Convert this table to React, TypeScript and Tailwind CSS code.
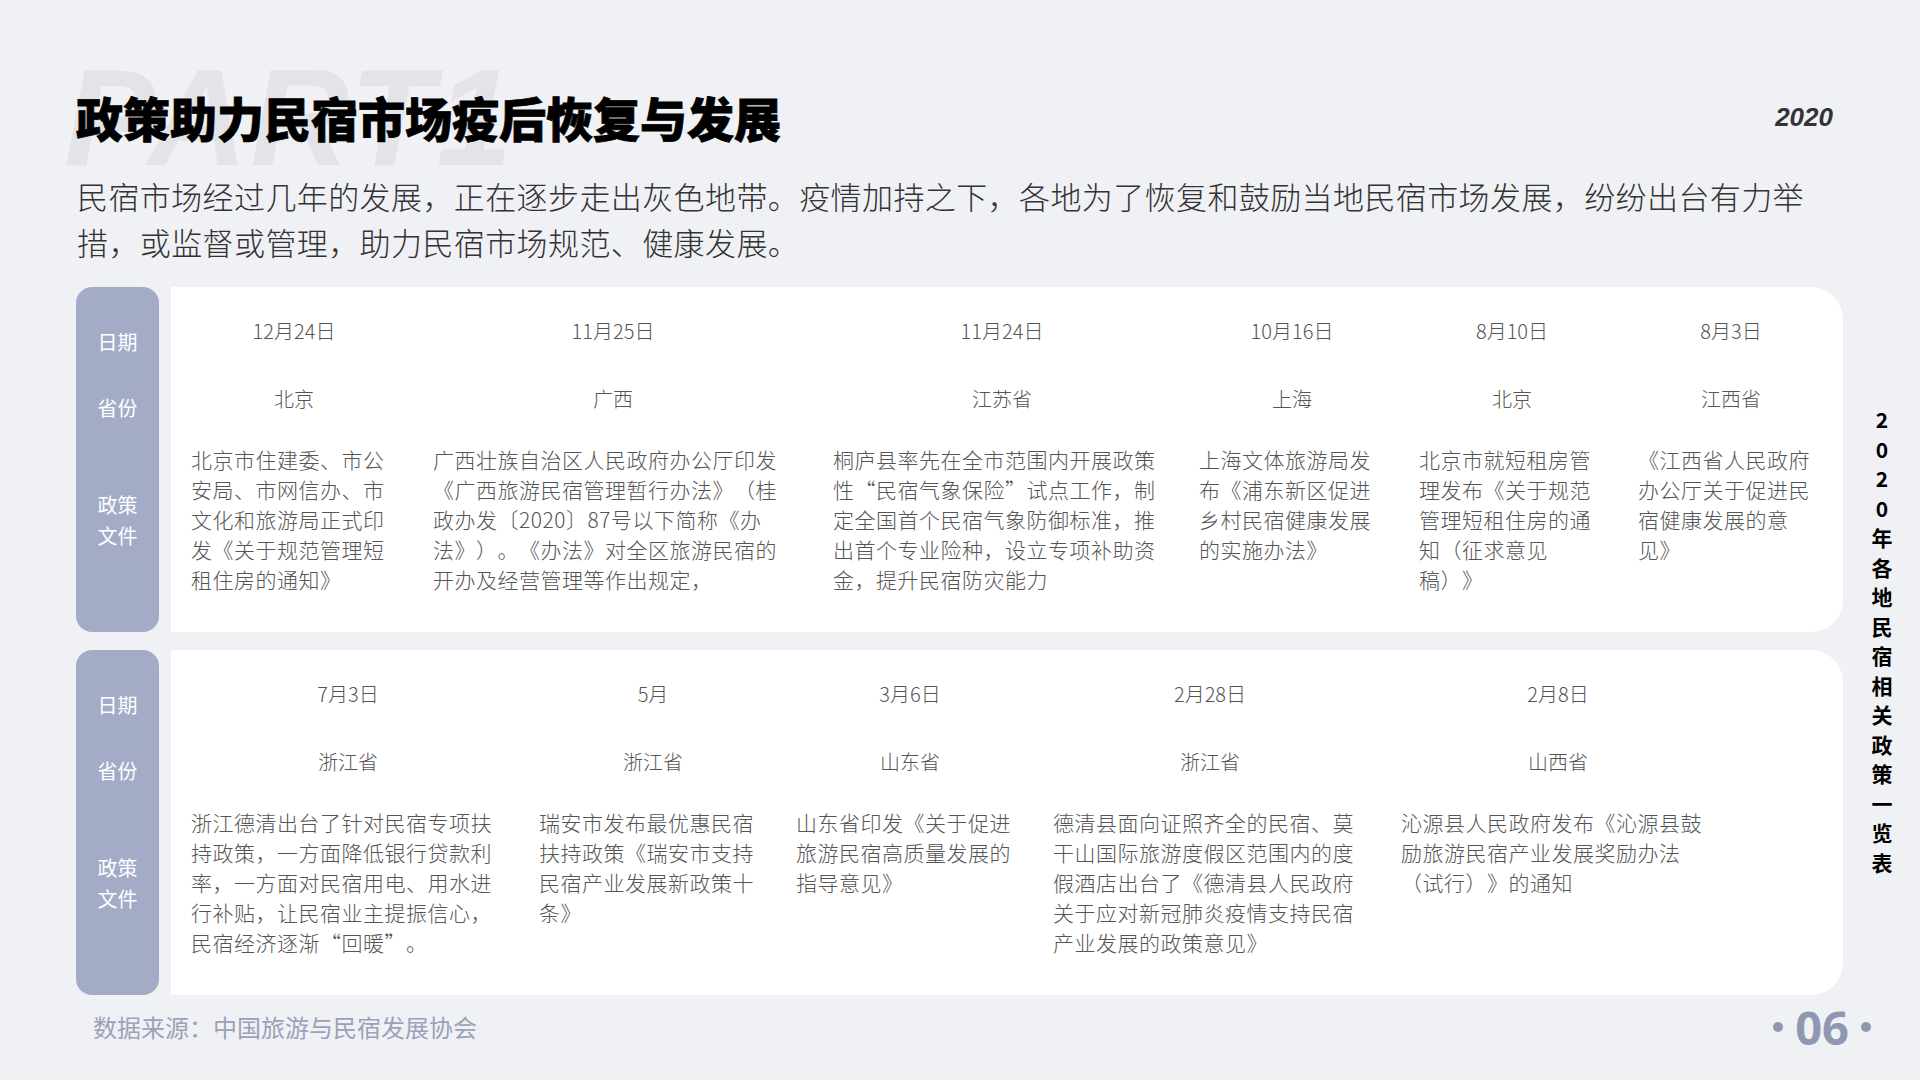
import React from 'react';

type Policy = {
    date: string;
    prov: string;
    outer: string;
    inner: string;
    lines: string[];
};

const cjk = "font-['Noto_Sans_CJK_SC','Noto_Sans',sans-serif]";

const row1: Policy[] = [
    {
        date: '12月24日', prov: '北京', outer: 'w-[242px]', inner: 'w-[196px]',
        lines: ['北京市住建委、市公', '安局、市网信办、市', '文化和旅游局正式印', '发《关于规范管理短', '租住房的通知》']
    },
    {
        date: '11月25日', prov: '广西', outer: 'w-[400px]', inner: 'w-[350px]',
        lines: ['广西壮族自治区人民政府办公厅印发', '《广西旅游民宿管理暂行办法》（桂', '政办发〔2020〕87号以下简称《办', '法》）。《办法》对全区旅游民宿的', '开办及经营管理等作出规定，']
    },
    {
        date: '11月24日', prov: '江苏省', outer: 'w-[366px]', inner: 'w-[328px]',
        lines: ['桐庐县率先在全市范围内开展政策', '性“民宿气象保险”试点工作，制', '定全国首个民宿气象防御标准，推', '出首个专业险种，设立专项补助资', '金，提升民宿防灾能力']
    },
    {
        date: '10月16日', prov: '上海', outer: 'w-[220px]', inner: 'w-[176px]',
        lines: ['上海文体旅游局发', '布《浦东新区促进', '乡村民宿健康发展', '的实施办法》']
    },
    {
        date: '8月10日', prov: '北京', outer: 'w-[219px]', inner: 'w-[176px]',
        lines: ['北京市就短租房管', '理发布《关于规范', '管理短租住房的通', '知（征求意见', '稿）》']
    },
    {
        date: '8月3日', prov: '江西省', outer: 'w-[176px]', inner: 'w-[176px]',
        lines: ['《江西省人民政府', '办公厅关于促进民', '宿健康发展的意', '见》']
    }
];

const row2: Policy[] = [
    {
        date: '7月3日', prov: '浙江省', outer: 'w-[348px]', inner: 'w-[304px]',
        lines: ['浙江德清出台了针对民宿专项扶', '持政策，一方面降低银行贷款利', '率，一方面对民宿用电、用水进', '行补贴，让民宿业主提振信心，', '民宿经济逐渐“回暖”。']
    },
    {
        date: '5月', prov: '浙江省', outer: 'w-[257px]', inner: 'w-[218px]',
        lines: ['瑞安市发布最优惠民宿', '扶持政策《瑞安市支持', '民宿产业发展新政策十', '条》']
    },
    {
        date: '3月6日', prov: '山东省', outer: 'w-[257px]', inner: 'w-[218px]',
        lines: ['山东省印发《关于促进', '旅游民宿高质量发展的', '指导意见》']
    },
    {
        date: '2月28日', prov: '浙江省', outer: 'w-[348px]', inner: 'w-[304px]',
        lines: ['德清县面向证照齐全的民宿、莫', '干山国际旅游度假区范围内的度', '假酒店出台了《德清县人民政府', '关于应对新冠肺炎疫情支持民宿', '产业发展的政策意见》']
    },
    {
        date: '2月8日', prov: '山西省', outer: 'w-[304px]', inner: 'w-[304px]',
        lines: ['沁源县人民政府发布《沁源县鼓', '励旅游民宿产业发展奖励办法', '（试行）》的通知']
    }
];

const sideTitle = '2020年各地民宿相关政策一览表'.split('');

const PolicyRow: React.FC<{ items: Policy[] }> = ({ items }) => (
    <div className="flex h-[345px]">
        {/* label pill */}
        <div className="w-[83px] shrink-0 rounded-[16px] bg-[#a3abc7] text-white text-[20px] flex flex-col items-center">
            <div className="mt-[40px] leading-[30px]">日期</div>
            <div className="mt-[36px] leading-[30px]">省份</div>
            <div className="mt-[66px] leading-[31px] text-center">政策<br />文件</div>
        </div>
        <div className="ml-[12px] w-[1672px] bg-white rounded-r-[32px] flex pl-[20px] pt-[29px]">
            {items.map((p, i) => (
                <div key={i} className={`${p.outer} shrink-0`}>
                    <div className={`${p.inner} flex flex-col text-[#555] font-light`}>
                        <div className="pl-[10px] text-center text-[20px] leading-[30px]">{p.date}</div>
                        <div className="pl-[10px] mt-[38px] text-center text-[20px] leading-[30px]">{p.prov}</div>
                        <div className="mt-[30px] text-[21px] leading-[30px] tracking-[0.5px] whitespace-nowrap">
                            {p.lines.map((l, j) => (
                                <div key={j}>{l}</div>
                            ))}
                        </div>
                    </div>
                </div>
            ))}
        </div>
    </div>
);

export default function App() {
    return (
        <div className={`w-[1920px] h-[1080px] bg-[#f0f1f5] overflow-hidden [text-spacing-trim:space-all] ${cjk}`}>
            {/* header */}
            <div className="relative pt-[89px] pl-[76px] pr-[87px] flex items-center justify-between">
                <div className="absolute left-[64px] top-[49px] text-[137px] leading-[137px] tracking-[3px] font-bold italic text-[#e3e4e8] font-['Liberation_Sans',sans-serif] select-none">
                    PART1
                </div>
                <h1 className="relative text-[47px] leading-[56px] font-black text-black [-webkit-text-stroke:0.8px_black]">政策助力民宿市场疫后恢复与发展</h1>
                <div className="relative text-[26px] leading-[30px] font-bold italic text-[#333] font-['Liberation_Sans',sans-serif]">2020</div>
            </div>

            <p className="mt-[28px] pl-[77px] text-[31px] leading-[46px] tracking-[0.4px] font-light text-[#333] whitespace-nowrap">
                民宿市场经过几年的发展，正在逐步走出灰色地带。疫情加持之下，各地为了恢复和鼓励当地民宿市场发展，纷纷出台有力举
                <br />
                措，或监督或管理，助力民宿市场规范、健康发展。
            </p>

            {/* tables + side title */}
            <div className="mt-[22px] pl-[76px] flex items-center">
                <div className="flex flex-col gap-[18px]">
                    <PolicyRow items={row1} />
                    <PolicyRow items={row2} />
                </div>
                <div className="ml-[19px] w-[40px] flex flex-col items-center text-[21px] leading-[29.5px] font-bold text-black">
                    {sideTitle.map((c, i) => (
                        <span key={i}>{c}</span>
                    ))}
                </div>
            </div>

            {/* footer */}
            <div className="mt-[7px] pl-[93px] pr-[49px] flex items-center justify-between">
                <div className="text-[24px] leading-[32px] text-[#9ba1b9]">数据来源：中国旅游与民宿发展协会</div>
                <div className="flex items-center gap-[12px] text-[#8f98b1]">
                    <span className="w-[10px] h-[10px] rounded-full bg-[#8f98b1]" />
                    <span className="text-[47px] leading-[50px] font-bold font-['Noto_Sans',sans-serif]">06</span>
                    <span className="w-[10px] h-[10px] rounded-full bg-[#8f98b1]" />
                </div>
            </div>
        </div>
    );
}
